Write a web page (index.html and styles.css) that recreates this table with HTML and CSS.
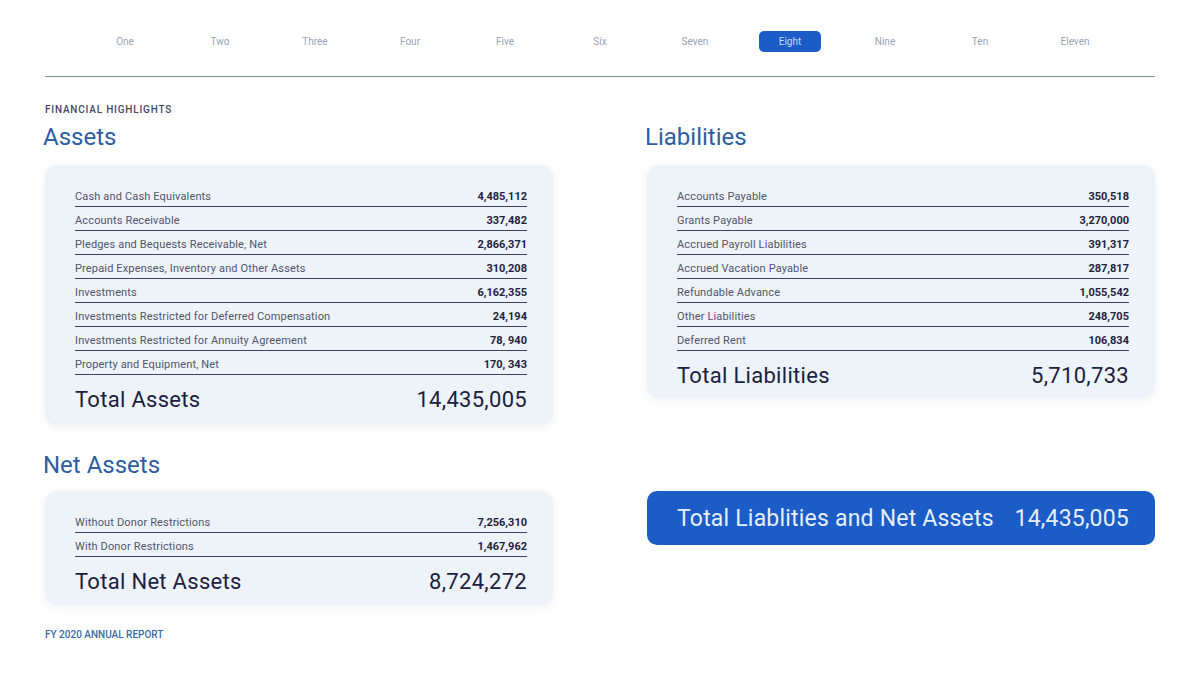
FILE: index.html
```html
<!DOCTYPE html>
<html lang="en">
<head>
<meta charset="utf-8">
<title>Financial Highlights</title>
<link rel="stylesheet" href="styles.css">
</head>
<body>
<div class="page">
  <nav class="nav">
    <span class="nav-item">One</span>
    <span class="nav-item">Two</span>
    <span class="nav-item">Three</span>
    <span class="nav-item">Four</span>
    <span class="nav-item">Five</span>
    <span class="nav-item">Six</span>
    <span class="nav-item">Seven</span>
    <span class="nav-item"><span class="pill">Eight</span></span>
    <span class="nav-item">Nine</span>
    <span class="nav-item">Ten</span>
    <span class="nav-item">Eleven</span>
  </nav>
  <div class="rule"></div>
  <div class="eyebrow">FINANCIAL HIGHLIGHTS</div>

  <div class="grid">
    <h2 class="heading">Assets</h2>
    <h2 class="heading">Liabilities</h2>

    <div class="card card-assets">
      <div class="row"><span class="label">Cash and Cash Equivalents</span><span class="value">4,485,112</span></div>
      <div class="row"><span class="label">Accounts Receivable</span><span class="value">337,482</span></div>
      <div class="row"><span class="label">Pledges and Bequests Receivable, Net</span><span class="value">2,866,371</span></div>
      <div class="row"><span class="label">Prepaid Expenses, Inventory and Other Assets</span><span class="value">310,208</span></div>
      <div class="row"><span class="label">Investments</span><span class="value">6,162,355</span></div>
      <div class="row"><span class="label">Investments Restricted for Deferred Compensation</span><span class="value">24,194</span></div>
      <div class="row"><span class="label">Investments Restricted for Annuity Agreement</span><span class="value">78, 940</span></div>
      <div class="row"><span class="label">Property and Equipment, Net</span><span class="value">170, 343</span></div>
      <div class="total"><span>Total Assets</span><span>14,435,005</span></div>
    </div>

    <div class="card card-liabilities">
      <div class="row"><span class="label">Accounts Payable</span><span class="value">350,518</span></div>
      <div class="row"><span class="label">Grants Payable</span><span class="value">3,270,000</span></div>
      <div class="row"><span class="label">Accrued Payroll Liabilities</span><span class="value">391,317</span></div>
      <div class="row"><span class="label">Accrued Vacation Payable</span><span class="value">287,817</span></div>
      <div class="row"><span class="label">Refundable Advance</span><span class="value">1,055,542</span></div>
      <div class="row"><span class="label">Other Liabilities</span><span class="value">248,705</span></div>
      <div class="row"><span class="label">Deferred Rent</span><span class="value">106,834</span></div>
      <div class="total"><span>Total Liabilities</span><span>5,710,733</span></div>
    </div>

    <h2 class="heading heading-second">Net Assets</h2>
    <div></div>

    <div class="card card-net">
      <div class="row"><span class="label">Without Donor Restrictions</span><span class="value">7,256,310</span></div>
      <div class="row"><span class="label">With Donor Restrictions</span><span class="value">1,467,962</span></div>
      <div class="total"><span>Total Net Assets</span><span>8,724,272</span></div>
    </div>

    <div class="grand">
      <span>Total Liablities and Net Assets</span><span>14,435,005</span>
    </div>
  </div>

  <div class="footer">FY 2020 ANNUAL REPORT</div>
</div>
</body>
</html>
```

FILE: styles.css
```css
* { box-sizing: border-box; }
html, body { margin: 0; padding: 0; background: #ffffff; }
body {
  font-family: Roboto, "Liberation Sans", sans-serif;
  color: #1e2340;
  width: 1200px;
  height: 675px;
  overflow: hidden;
}
.page { padding: 31px 45px 0 45px; }

.nav {
  display: flex;
  justify-content: center;
  height: 21px;
}
.nav-item {
  width: 95px;
  display: flex;
  align-items: center;
  justify-content: center;
  font-size: 10px;
  color: #95a3b8;
}
.pill {
  display: flex;
  align-items: center;
  justify-content: center;
  width: 62px;
  height: 21px;
  border-radius: 5px;
  background: #1b5cc6;
  color: #c9d9f5;
}
.rule {
  margin-top: 24px;
  height: 1px;
  background: #7f909e;
}
.eyebrow {
  margin-top: 27px;
  font-size: 10px;
  line-height: 12px;
  letter-spacing: 0.8px;
  color: #3f4a62;
  font-weight: 500;
}

.grid {
  display: grid;
  grid-template-columns: 508px 508px;
  column-gap: 94px;
  align-items: start;
}
.heading {
  margin: 7px 0 14px -2px;
  font-size: 24px;
  line-height: 28px;
  font-weight: 400;
  color: #2d5e9f;
}
.heading-second { margin-top: 26px; margin-bottom: 12px; }

.card {
  background: #eef2f9;
  border-radius: 12px;
  box-shadow: 0 2px 8px rgba(40, 60, 100, 0.07);
  padding: 18px 26px 10px 30px;
}
.card-assets { padding-bottom: 11px; }
.card-liabilities { padding-bottom: 8px; }
.card-net { padding-bottom: 9px; }

.row {
  display: flex;
  justify-content: space-between;
  align-items: center;
  padding-top: 6px;
  padding-bottom: 1px;
  line-height: 16px;
  border-bottom: 1px solid #3d4360;
}
.label {
  font-size: 11px;
  color: #50566c;
  letter-spacing: 0.15px;
}
.value {
  font-size: 11px;
  font-weight: 700;
  color: #1e2340;
}
.total {
  display: flex;
  justify-content: space-between;
  padding-top: 11px;
  font-size: 22px;
  line-height: 28px;
  font-weight: 400;
  letter-spacing: 0.3px;
  color: #1c2140;
}

.grand {
  height: 54px;
  border-radius: 10px;
  background: #1b5cc6;
  display: flex;
  justify-content: space-between;
  align-items: center;
  padding: 0 26px 0 30px;
  font-size: 23px;
  font-weight: 400;
  color: #e6eefc;
  letter-spacing: 0.2px;
}

.footer {
  margin-top: 24px;
  font-size: 10px;
  line-height: 12px;
  color: #3b6aa6;
  font-weight: 500;
}
```
